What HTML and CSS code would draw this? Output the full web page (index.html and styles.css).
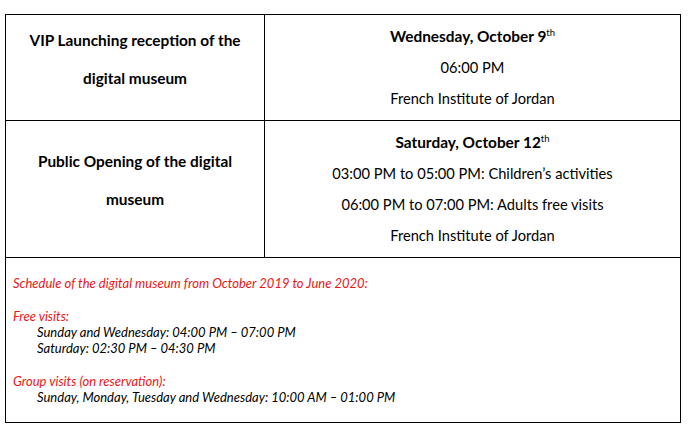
FILE: index.html
```html
<!DOCTYPE html>
<html lang="en">
<head>
<meta charset="utf-8">
<title>Digital museum schedule</title>
<link rel="stylesheet" href="styles.css">
</head>
<body>
<div class="sheet">
  <div class="grid">
    <div class="cell label">
      <p>VIP Launching reception of the</p>
      <p>digital museum</p>
    </div>
    <div class="cell detail first">
      <p class="day">Wednesday, October 9<sup>th</sup></p>
      <p>06:00 PM</p>
      <p>French Institute of Jordan</p>
    </div>
    <div class="cell label second">
      <p>Public Opening of the digital</p>
      <p>museum</p>
    </div>
    <div class="cell detail second">
      <p class="day">Saturday, October 12<sup>th</sup></p>
      <p>03:00 PM to 05:00 PM: Children’s activities</p>
      <p>06:00 PM to 07:00 PM: Adults free visits</p>
      <p>French Institute of Jordan</p>
    </div>
    <div class="cell schedule">
      <p class="red">Schedule of the digital museum from October 2019 to June 2020:</p>
      <p class="blank">&nbsp;</p>
      <p class="red">Free visits:</p>
      <p class="indent">Sunday and Wednesday: 04:00 PM – 07:00 PM</p>
      <p class="indent">Saturday: 02:30 PM – 04:30 PM</p>
      <p class="blank">&nbsp;</p>
      <p class="red">Group visits (on reservation):</p>
      <p class="indent">Sunday, Monday, Tuesday and Wednesday: 10:00 AM – 01:00 PM</p>
    </div>
  </div>
</div>
</body>
</html>
```
FILE: styles.css
```css
* { box-sizing: border-box; }
html, body { margin: 0; padding: 0; background: #fff; }
body {
  font-family: Lato, "Liberation Sans", sans-serif;
  font-size: 14.67px;
  color: #000;
}
p { margin: 0; }
.sheet { padding: 14px 0 0 5px; }
.grid {
  width: 676px;
  display: grid;
  grid-template-columns: 259px 1fr;
  grid-template-rows: 106px 137px 165px;
  border-left: 1px solid #000;
  border-top: 1px solid #000;
}
.cell {
  border-right: 1px solid #000;
  border-bottom: 1px solid #000;
}
.label {
  font-weight: 700;
  font-size: 15.4px;
  line-height: 38px;
  text-align: center;
  display: flex;
  flex-direction: column;
  justify-content: center;
  padding-bottom: 18px;
}
.detail {
  line-height: 31px;
  text-align: center;
  display: flex;
  flex-direction: column;
  justify-content: center;
}
.day { font-weight: 700; font-size: 15.4px; }
sup {
  font-size: 9.5px;
  line-height: 0;
  vertical-align: 6px;
  font-weight: 400;
}
.schedule {
  grid-column: 1 / 3;
  padding: 17px 0 0 7px;
  font-style: italic;
  line-height: 16.3px;
  font-size: 13px;
}
.red { color: #f01414; }
.indent { padding-left: 24px; }
```
